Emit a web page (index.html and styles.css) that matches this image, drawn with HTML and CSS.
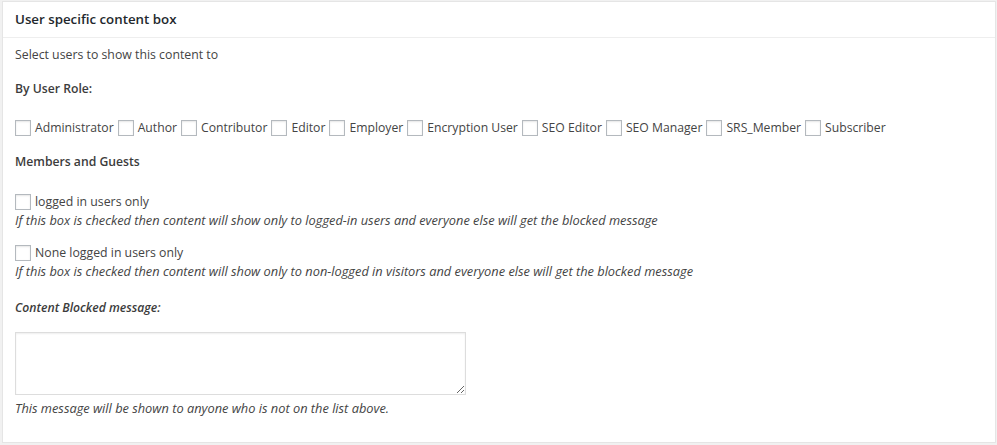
FILE: index.html
```html
<!DOCTYPE html>
<html>
<head>
<meta charset="utf-8">
<link rel="stylesheet" href="styles.css">
</head>
<body>
<div class="postbox">
  <h2 class="hndle">User specific content box</h2>
  <div class="inside">
    <p class="intro">Select users to show this content to</p>
    <p class="heading">By User Role:</p>
    <div class="roles">
      <label class="opt"><input type="checkbox" class="cb">Administrator</label>
      <label class="opt"><input type="checkbox" class="cb">Author</label>
      <label class="opt"><input type="checkbox" class="cb">Contributor</label>
      <label class="opt"><input type="checkbox" class="cb">Editor</label>
      <label class="opt"><input type="checkbox" class="cb">Employer</label>
      <label class="opt"><input type="checkbox" class="cb">Encryption User</label>
      <label class="opt"><input type="checkbox" class="cb">SEO Editor</label>
      <label class="opt"><input type="checkbox" class="cb">SEO Manager</label>
      <label class="opt"><input type="checkbox" class="cb">SRS_Member</label>
      <label class="opt"><input type="checkbox" class="cb">Subscriber</label>
    </div>
    <p class="heading members">Members and Guests</p>
    <div class="guest">
      <label class="opt"><input type="checkbox" class="cb">logged in users only</label>
      <p class="desc">If this box is checked then content will show only to logged-in users and everyone else will get the blocked message</p>
    </div>
    <div class="guest">
      <label class="opt"><input type="checkbox" class="cb">None logged in users only</label>
      <p class="desc">If this box is checked then content will show only to non-logged in visitors and everyone else will get the blocked message</p>
    </div>
    <p class="heading blocked">Content Blocked message:</p>
    <textarea class="msg"></textarea>
    <p class="desc note">This message will be shown to anyone who is not on the list above.</p>
  </div>
</div>
</body>
</html>
```
FILE: styles.css
```css
html, body {
  margin: 0;
  padding: 0;
  background: #f1f1f1;
}
body {
  padding: 1px 1px 0 2px;
  font-family: "Open Sans", "Noto Sans", sans-serif;
  font-size: 12.3px;
  color: #444;
}
.postbox {
  background: #fff;
  border: 1px solid #e5e5e5;
  height: 442px;
  box-sizing: border-box;
}
.hndle {
  margin: 0;
  font-size: 13.3px;
  font-weight: 600;
  color: #23282d;
  line-height: 19px;
  padding: 8px 12px 8px 12px;
  border-bottom: 1px solid #eee;
}
.inside {
  padding: 0 12px;
}
p {
  margin: 0;
}
.intro {
  margin-top: 7px;
  line-height: 19px;
}
.heading {
  font-weight: 600;
  font-size: 12.2px;
  line-height: 19px;
  margin-top: 15px;
  color: #3c3c3c;
}
.roles {
  display: flex;
  flex-wrap: wrap;
  margin-top: 20px;
  font-size: 12.2px;
}
.opt {
  display: inline-flex;
  align-items: center;
  line-height: 19px;
  margin-right: 4px;
}
.guest .opt {
  display: flex;
  margin-right: 0;
}
.cb {
  appearance: none;
  -webkit-appearance: none;
  width: 16px;
  height: 16px;
  margin: 0 4px 0 0;
  border: 1px solid #b4b9be;
  background: #fff;
  box-shadow: inset 0 1px 2px rgba(0,0,0,.1);
  box-sizing: border-box;
}
.members {
  margin-top: 15px;
}
.guest {
  margin-top: 21px;
}
.guest + .guest {
  margin-top: 13px;
}
.desc {
  font-style: italic;
  font-size: 12.8px;
  line-height: 19px;
}
.heading.blocked {
  font-style: italic;
  margin-top: 17px;
}
.msg {
  display: block;
  width: 451px;
  height: 63px;
  margin-top: 15px;
  border: 1px solid #ddd;
  box-shadow: inset 0 1px 2px rgba(0,0,0,.07);
  box-sizing: border-box;
  resize: both;
  padding: 2px 6px;
  font: inherit;
}
.note {
  margin-top: 4px;
}
```
